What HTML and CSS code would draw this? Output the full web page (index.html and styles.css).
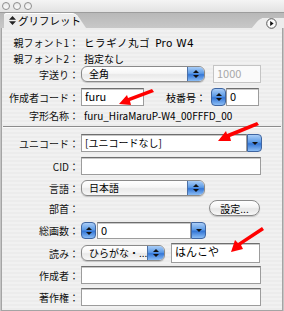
FILE: index.html
```html
<!DOCTYPE html>
<html lang="ja">
<head>
    <meta charset="UTF-8">
    <title>グリフレット</title>
    <link rel="stylesheet" href="styles.css">
</head>
<body>
    <div class="window">
        <div class="titlebar">
            <span class="light"></span>
            <span class="light"></span>
            <span class="light"></span>
        </div>

        <div class="tabbar">
            <div class="tab">
                <svg class="tab-icon" width="7" height="9" viewBox="0 0 7 9">
                    <path d="M3.5 0 L7 3.8 H0 Z M0 5.2 H7 L3.5 9 Z" fill="#222"/>
                </svg>
                <span>グリフレット</span>
            </div>
            <div class="tab-menu">
                <svg width="11" height="11" viewBox="0 0 11 11">
                    <circle cx="5.5" cy="5.5" r="4.8" fill="#fafafa" stroke="#555" stroke-width="1"/>
                    <path d="M4.2 3 L7.6 5.5 L4.2 8 Z" fill="#111"/>
                </svg>
            </div>
        </div>

        <div class="panel">
            <div class="row r-info">
                <span class="label">親フォント1：</span>
                <span class="value wide">ヒラギノ丸ゴ <span class="latin">Pro W4</span></span>
            </div>
            <div class="row r-info">
                <span class="label">親フォント2：</span>
                <span class="value">指定なし</span>
            </div>
            <div class="row r-popup">
                <span class="label">字送り：</span>
                <div class="popup w-wide">
                    <span class="popup-text">全角</span>
                    <span class="popup-btn"><i class="up"></i><i class="down"></i></span>
                </div>
                <div class="field disabled w-num">1000</div>
            </div>
            <div class="row r-author">
                <span class="label">作成者コード：</span>
                <div class="field w-code">furu</div>
                <span class="sublabel">枝番号：</span>
                <span class="stepper"><i class="up"></i><i class="down"></i></span>
                <div class="field w-branch">0</div>
            </div>
            <div class="row r-name">
                <span class="label">字形名称：</span>
                <span class="value">furu_HiraMaruP-W4_00FFFD_00</span>
            </div>

            <div class="separator"></div>

            <div class="row r-unicode">
                <span class="label">ユニコード：</span>
                <div class="field w-combo">[ユニコードなし]</div>
                <span class="combo-btn"><i class="down"></i></span>
            </div>
            <div class="row r-cid">
                <span class="label">CID：</span>
                <div class="field w-full"></div>
            </div>
            <div class="row r-lang">
                <span class="label">言語：</span>
                <div class="popup w-wide">
                    <span class="popup-text">日本語</span>
                    <span class="popup-btn"><i class="up"></i><i class="down"></i></span>
                </div>
            </div>
            <div class="row r-radical">
                <span class="label">部首：</span>
                <button class="push">設定...</button>
            </div>
            <div class="row r-strokes">
                <span class="label">総画数：</span>
                <span class="stepper"><i class="up"></i><i class="down"></i></span>
                <div class="field w-strokes">0</div>
                <span class="combo-btn"><i class="down"></i></span>
            </div>
            <div class="row r-reading">
                <span class="label">読み：</span>
                <div class="popup w-kana">
                    <span class="popup-text">ひらがな・...</span>
                    <span class="popup-btn"><i class="up"></i><i class="down"></i></span>
                </div>
                <div class="field w-reading">はんこや</div>
            </div>
            <div class="row r-creator">
                <span class="label">作成者：</span>
                <div class="field w-full"></div>
            </div>
            <div class="row r-copyright">
                <span class="label">著作権：</span>
                <div class="field w-full"></div>
            </div>
        </div>

        <!-- 注釈の赤い矢印 -->
        <svg class="arrows" width="284" height="311" viewBox="0 0 284 311">
            <g fill="#f00" stroke="none">
                <path d="M152 89 L154 92 L130 101 L131 105 L119 104 L127 95 L128 98 Z"/>
                <path d="M257 122 L259 125 L230 137 L231 141 L218 141 L226 131 L227 134 Z"/>
                <path d="M262 227 L264 230 L241 245 L243 249 L231 252 L235 240 L238 243 Z"/>
            </g>
        </svg>
    </div>
</body>
</html>
```

FILE: styles.css
```css
* { box-sizing: border-box; }

body {
    margin: 0;
    font-family: "Noto Sans CJK JP", "Liberation Sans", sans-serif;
    font-size: 10px;
    color: #000;
    background: #fff;
}

.window {
    position: relative;
    width: 284px;
    height: 311px;
    overflow: hidden;
    background: #c4c4c4;
}

/* タイトルバー */
.titlebar {
    height: 13px;
    display: flex;
    align-items: center;
    gap: 3px;
    padding-left: 2px;
    background: linear-gradient(#f4f4f4, #e2e2e2);
    border-bottom: 1px solid #9c9c9c;
}
.light {
    width: 8px;
    height: 8px;
    border-radius: 50%;
    border: 1px solid #8e8e8e;
    background: linear-gradient(#e8e8e8, #fbfbfb);
}

/* タブ */
.tabbar {
    height: 15px;
    display: flex;
    align-items: flex-end;
    justify-content: space-between;
    background: linear-gradient(#b8b8b8, #c8c8c8);
}
.tab {
    position: relative;
    width: 68px;
    height: 15px;
    margin-left: 4px;
    display: flex;
    align-items: center;
    gap: 2px;
    padding-left: 5px;
    background: #ececec;
    border-top-left-radius: 3px;
    box-shadow: inset 0 1px 0 #fff;
    font-size: 10.5px;
    white-space: nowrap;
}
.tab::after {
    content: '';
    position: absolute;
    top: 0;
    right: -9px;
    width: 16px;
    height: 15px;
    background: #ececec;
    transform: skewX(34deg);
    border-top-right-radius: 5px;
    box-shadow: inset 0 1px 0 #fff;
}
.tab span, .tab svg { position: relative; z-index: 1; flex: none; }
.tab-menu {
    position: relative;
    width: 22px;
    height: 10px;
    display: flex;
    align-items: center;
    justify-content: flex-end;
    padding-right: 7px;
    background: #ececec;
}
.tab-menu::before {
    content: '';
    position: absolute;
    top: 0;
    left: -6px;
    width: 14px;
    height: 10px;
    background: #ececec;
    transform: skewX(-40deg);
    border-top-left-radius: 4px;
}
.tab-menu svg { position: relative; z-index: 1; margin-top: 1px; }

/* パネル本体 */
.panel {
    height: 283px;
    padding-top: 6px;
    margin: 0 1px;
    border-left: 1px solid #a4a4a4;
    border-right: 1px solid #a4a4a4;
    border-bottom: 1px solid #a4a4a4;
    background: repeating-linear-gradient(#ececec 0, #ececec 2px, #f1f1f1 2px, #f1f1f1 4px);
}

.row {
    display: flex;
    align-items: center;
}
.label {
    width: 77px;
    flex: none;
    text-align: right;
    white-space: nowrap;
    color: #111;
}
.value {
    margin-left: 5px;
    white-space: nowrap;
}
.value.wide {
    font-size: 10.5px;
    letter-spacing: 0.6px;
}
.latin {
    font-family: "DejaVu Sans", sans-serif;
    font-size: 10.5px;
    letter-spacing: 0.3px;
    margin-left: 2px;
}
.sublabel {
    margin-left: 22px;
    width: 43px;
    white-space: nowrap;
}

.r-info { height: 16px; }
.r-popup { height: 16px; }
.r-author { height: 18px; margin-top: 6px; }
.r-name { height: 16px; margin-top: 1px; }
.r-unicode { height: 18px; margin-top: 6px; }
.r-cid { height: 18px; margin-top: 5px; }
.r-lang { height: 16px; margin-top: 5px; }
.r-radical { height: 16px; margin-top: 4px; }
.r-strokes { height: 17px; margin-top: 6px; }
.r-reading { height: 20px; margin-top: 4px; }
.r-creator { height: 18px; margin-top: 3px; }
.r-copyright { height: 18px; margin-top: 4px; }

.separator {
    height: 2px;
    margin: 3px 1px 0 1px;
    border-top: 1px solid #8c8c8c;
    border-bottom: 1px solid #fafafa;
}

/* テキストフィールド */
.field {
    height: 100%;
    margin-left: 2px;
    padding: 0 3px;
    line-height: 15px;
    font-size: 11px;
    background: #fff;
    border: 1px solid #9c9c9c;
    border-top-color: #6e6e6e;
    box-shadow: inset 0 1px 0 #c8c8c8;
    white-space: nowrap;
    overflow: hidden;
}
.field.disabled {
    color: #a8a8a8;
    border-color: #c4c4c4;
    box-shadow: none;
    background: #fafafa;
}
.w-num { width: 48px; height: 18px; margin-left: 8px; }
.w-code { width: 63px; }
.w-branch { width: 33px; margin-left: 0; }
.w-combo { width: 166px; font-size: 10px; }
.w-full { width: 180px; }
.w-strokes { width: 94px; margin-left: 1px; }
.w-reading { width: 89px; margin-left: 6px; line-height: 14px; align-self: stretch; }

/* ポップアップメニュー */
.popup {
    height: 16px;
    margin-left: 2px;
    display: flex;
    border: 1px solid #8a8a8a;
    border-radius: 6px;
    overflow: hidden;
    background: linear-gradient(#ffffff, #f6f6f6 45%, #e9e9e9 55%, #f7f7f7);
    box-shadow: 0 1px 1px rgba(0, 0, 0, 0.18);
}
.w-wide { width: 124px; }
.w-kana { width: 84px; }
.popup-text {
    flex: 1;
    padding-left: 7px;
    line-height: 14px;
    white-space: nowrap;
}
.popup-btn, .stepper, .combo-btn {
    display: flex;
    flex-direction: column;
    align-items: center;
    justify-content: center;
    gap: 2px;
    background: linear-gradient(#a9cdf7, #5d9be6 45%, #3476d6 55%, #8bbdf5);
}
.popup-btn {
    width: 17px;
    border-left: 1px solid #4c70a6;
}
.stepper {
    width: 15px;
    height: 18px;
    margin-left: 2px;
    border: 1px solid #3f65a0;
    border-radius: 4px;
}
.r-strokes .stepper { height: 17px; }
.combo-btn {
    width: 15px;
    height: 18px;
    border: 1px solid #3f65a0;
    border-radius: 0 4px 4px 0;
}
.r-strokes .combo-btn { height: 17px; }

i.up, i.down {
    display: block;
    width: 0;
    height: 0;
    border-left: 3px solid transparent;
    border-right: 3px solid transparent;
}
i.up { border-bottom: 3px solid #111; }
i.down { border-top: 3px solid #111; }

/* ボタン */
.push {
    margin-left: 130px;
    width: 51px;
    height: 16px;
    padding: 0;
    font-family: inherit;
    font-size: 10px;
    color: #000;
    border: 1px solid #8a8a8a;
    border-radius: 8px;
    background: linear-gradient(#ffffff, #f4f4f4 45%, #e6e6e6 55%, #f7f7f7);
    box-shadow: 0 1px 1px rgba(0, 0, 0, 0.18);
}

.arrows {
    position: absolute;
    left: 0;
    top: 0;
    pointer-events: none;
}
```
